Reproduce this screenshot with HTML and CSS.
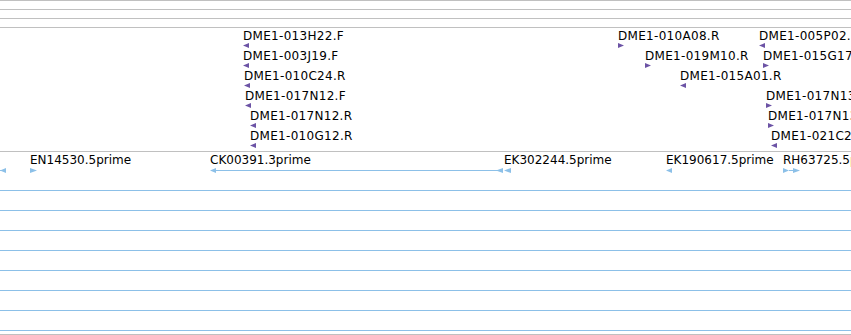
FILE: index.html
```html
<!DOCTYPE html>
<html lang="en">
  <head>
    <meta charset="UTF-8" />
    <title>Clone and EST tracks</title>
    <link rel="stylesheet" href="styles.css">
  </head>
  <body>
    <div class="browser">
      <div class="ruler"></div>
      <div class="ruler"></div>
      <div class="ruler"></div>

      <!-- BAC end clones, one row every 20px -->
      <div class="track clones">
        <div class="clone" style="left:243px;top:1px"><span>DME1-013H22.F</span><svg class="tri" width="6" height="5"><polygon points="0,2.5 6,0 6,5" /></svg></div>
        <div class="clone" style="left:243px;top:21px"><span>DME1-003J19.F</span><svg class="tri" width="6" height="5"><polygon points="0,2.5 6,0 6,5" /></svg></div>
        <div class="clone" style="left:244px;top:41px"><span>DME1-010C24.R</span><svg class="tri" width="6" height="5"><polygon points="0,2.5 6,0 6,5" /></svg></div>
        <div class="clone" style="left:245px;top:61px"><span>DME1-017N12.F</span><svg class="tri" width="6" height="5"><polygon points="0,2.5 6,0 6,5" /></svg></div>
        <div class="clone" style="left:250px;top:81px"><span>DME1-017N12.R</span><svg class="tri" width="6" height="5"><polygon points="0,2.5 6,0 6,5" /></svg></div>
        <div class="clone" style="left:250px;top:101px"><span>DME1-010G12.R</span><svg class="tri" width="6" height="5"><polygon points="0,2.5 6,0 6,5" /></svg></div>

        <div class="clone" style="left:618px;top:1px"><span>DME1-010A08.R</span><svg class="tri" width="6" height="5"><polygon points="0,0 6,2.5 0,5" /></svg></div>
        <div class="clone" style="left:645px;top:21px"><span>DME1-019M10.R</span><svg class="tri" width="6" height="5"><polygon points="0,0 6,2.5 0,5" /></svg></div>
        <div class="clone" style="left:680px;top:41px"><span>DME1-015A01.R</span><svg class="tri" width="6" height="5"><polygon points="0,2.5 6,0 6,5" /></svg></div>

        <div class="clone" style="left:759px;top:1px"><span>DME1-005P02.R</span><svg class="tri" width="6" height="5"><polygon points="0,2.5 6,0 6,5" /></svg></div>
        <div class="clone" style="left:763px;top:21px"><span>DME1-015G17.F</span><svg class="tri" width="6" height="5"><polygon points="0,0 6,2.5 0,5" /></svg></div>
        <div class="clone" style="left:766px;top:61px"><span>DME1-017N13.F</span><svg class="tri" width="6" height="5"><polygon points="0,0 6,2.5 0,5" /></svg></div>
        <div class="clone" style="left:768px;top:81px"><span>DME1-017N13.R</span><svg class="tri" width="6" height="5"><polygon points="0,0 6,2.5 0,5" /></svg></div>
        <div class="clone" style="left:771px;top:101px"><span>DME1-021C24.F</span><svg class="tri" width="6" height="5"><polygon points="0,2.5 6,0 6,5" /></svg></div>
      </div>

      <!-- EST alignments -->
      <div class="track est">
        <div class="est-row">
          <span class="est-label" style="left:30px">EN14530.5prime</span>
          <span class="est-label" style="left:210px">CK00391.3prime</span>
          <span class="est-label" style="left:504px">EK302244.5prime</span>
          <span class="est-label" style="left:666px">EK190617.5prime</span>
          <span class="est-label" style="left:783px">RH63725.5prime</span>
          <svg class="est-glyphs" width="851" height="5" viewBox="0 0 851 5">
            <rect x="0" y="2" width="3" height="1" />
            <polygon points="0,2.5 6,0 6,5" />
            <polygon points="30,0 37,2.5 30,5" />
            <polygon points="210,2.5 216,0 216,5" />
            <rect x="216" y="2" width="282" height="1" />
            <polygon points="496,2.5 503,0 503,5" />
            <polygon points="504,2.5 511,0 511,5" />
            <polygon points="666,2.5 672,0 672,5" />
            <polygon points="783,0 789,2.5 783,5" />
            <rect x="789" y="2" width="5" height="1" />
            <polygon points="793,0 800,2.5 793,5" />
          </svg>
        </div>
        <div class="lane"></div>
        <div class="lane"></div>
        <div class="lane"></div>
        <div class="lane"></div>
        <div class="lane"></div>
        <div class="lane"></div>
        <div class="lane"></div>
        <div class="lane last"></div>
      </div>
    </div>
  </body>
</html>
```

FILE: styles.css
```css
body {
  margin: 0;
  padding: 0;
  background: #fff;
  font-family: "DejaVu Sans", sans-serif;
  font-size: 12px;
  color: #000;
  overflow: hidden;
}

.browser {
  width: 851px;
  height: 335px;
  overflow: hidden;
}

/* Thin grey bands at the top */
.ruler {
  height: 8px;
  border-top: 1px solid #c0c0c0;
}

.track {
  position: relative;
  border-top: 1px solid #c0c0c0;
}

/* Clone ends track */
.clones {
  height: 123px;
}

.clone {
  position: absolute;
  display: flex;
  flex-direction: column;
  align-items: flex-start;
}

.clone span {
  line-height: 14px;
  letter-spacing: 0.3px;
  white-space: nowrap;
}

.tri {
  display: block;
  fill: #6c53a5;
}

/* EST track */
.est {
  border-bottom: 1px solid #c0c0c0;
}

.est-row {
  position: relative;
  height: 38px;
  padding-top: 16px;
  box-sizing: border-box;
}

.est-label {
  position: absolute;
  top: 1px;
  line-height: 14px;
  white-space: nowrap;
}

.est-glyphs {
  display: block;
  fill: #8cc0e8;
}

.lane {
  height: 19px;
  border-top: 1px solid #8cc0e8;
}

.lane.last {
  height: 3px;
}
```
